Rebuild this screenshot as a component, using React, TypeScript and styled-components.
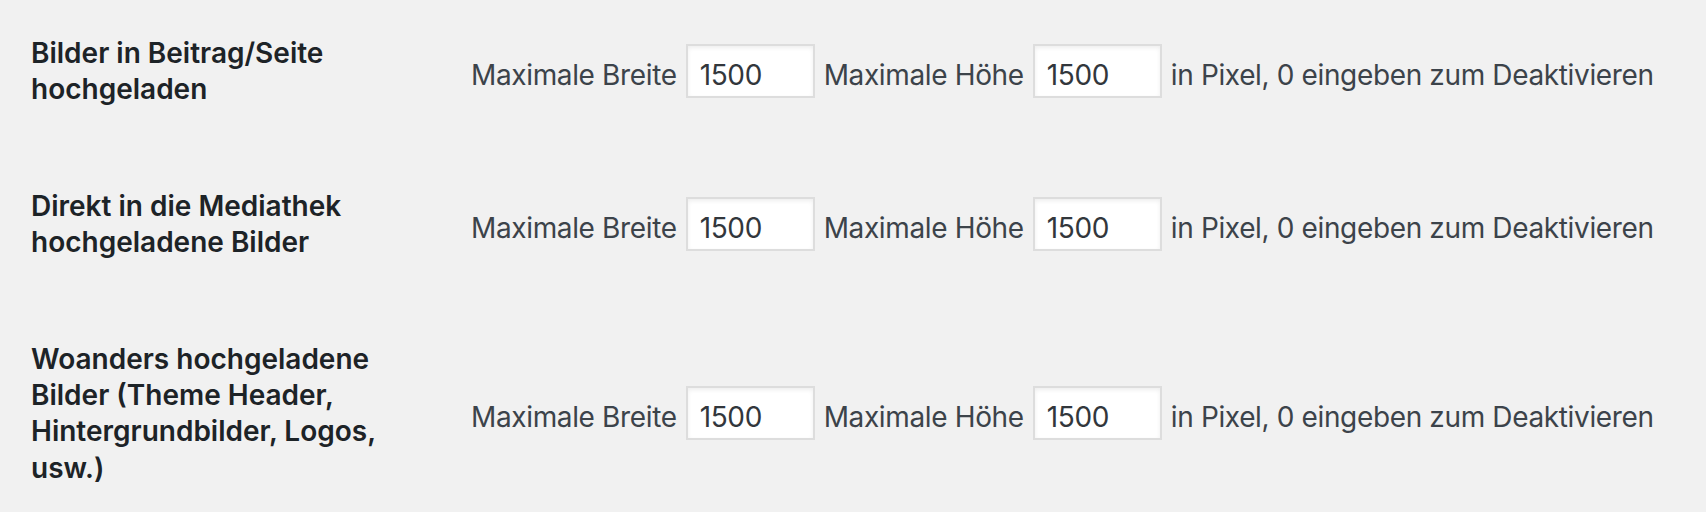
import React from "react";
import styled, { createGlobalStyle } from "styled-components";

const Global = createGlobalStyle`
  html, body { margin: 0; padding: 0; background: #f1f1f1; }
  body { font-family: Inter, "Noto Sans", sans-serif; -webkit-font-smoothing: antialiased; }
`;

const FormTable = styled.table`
  border-collapse: collapse;
  margin: -5px 0 0 31px;
`;

const Row = styled.tr``;

const Label = styled.th`
  width: 400px;
  padding: 40px 20px 40px 0;
  text-align: left;
  vertical-align: top;
  font-size: 28px;
  line-height: 36.4px;
  font-weight: 600;
  color: #1d2327;
`;

const Field = styled.td`
  padding: 0 20px;
  vertical-align: middle;
  font-size: 28px;
  line-height: 36.4px;
  letter-spacing: -0.36px;
  color: #3c434a;
`;

const Controls = styled.div`
  display: flex;
  align-items: center;
  gap: 9px;
  white-space: nowrap;
`;

const NumberInput = styled.input`
  box-sizing: border-box;
  width: 129px;
  height: 54px;
  margin: 0;
  padding: 8px 12px 0;
  border: 2px solid #dddddd;
  border-radius: 0;
  background: #ffffff;
  box-shadow: inset 0 2px 4px rgba(0, 0, 0, 0.07);
  font-family: inherit;
  font-size: 28px;
  letter-spacing: -0.36px;
  color: #32373c;
  outline: none;
`;

const Text = styled.span`
  padding-top: 7px;
`;

const rows = [
  ["Bilder in Beitrag/Seite", "hochgeladen"],
  ["Direkt in die Mediathek", "hochgeladene Bilder"],
  ["Woanders hochgeladene", "Bilder (Theme Header,", "Hintergrundbilder, Logos,", "usw.)"],
];

export default function App() {
  return (
    <>
      <Global />
      <FormTable>
        <tbody>
          {rows.map((lines, i) => (
            <Row key={i}>
              <Label scope="row">
                {lines.map((l, j) => (
                  <React.Fragment key={j}>
                    {l}
                    {j < lines.length - 1 && <br />}
                  </React.Fragment>
                ))}
              </Label>
              <Field>
                <Controls>
                  <Text>Maximale Breite</Text>
                  <NumberInput type="text" defaultValue="1500" />
                  <Text>Maximale Höhe</Text>
                  <NumberInput type="text" defaultValue="1500" />
                  <Text>in Pixel, 0 eingeben zum Deaktivieren</Text>
                </Controls>
              </Field>
            </Row>
          ))}
        </tbody>
      </FormTable>
    </>
  );
}
